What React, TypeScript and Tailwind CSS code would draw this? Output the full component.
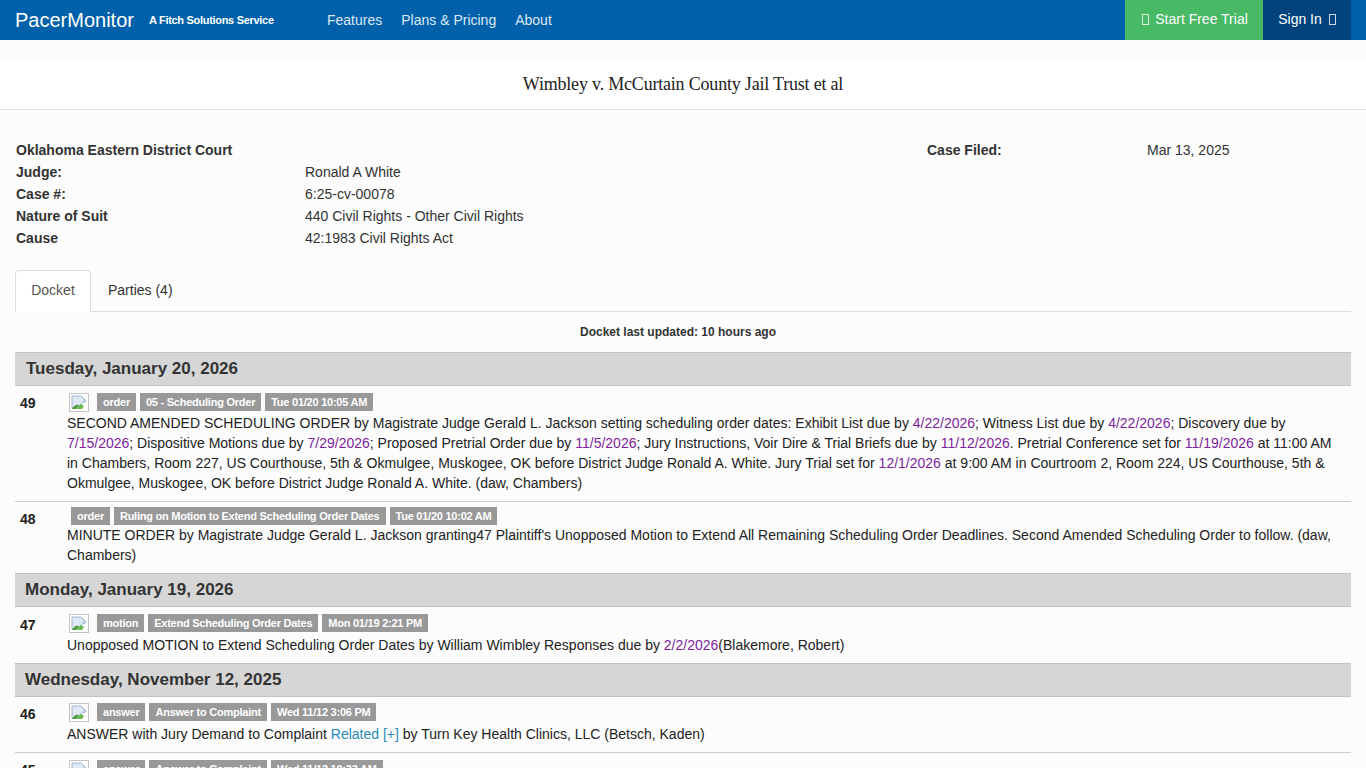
import React from 'react';

const Tofu = () => <span className="inline-block h-[11px] w-[7px] border border-current align-[-1px] opacity-80" />;

const BrokenImage = () => (
    <svg width="20" height="19" viewBox="0 0 20 19" className="shrink-0">
        <rect x="0.5" y="0.5" width="19" height="18" fill="#fff" stroke="#c4c4c4" />
        <path d="M3 3h9l3 3v3l-3 2-3 3-3 1H3z" fill="#dfe8f5" stroke="#8ea4c4" strokeWidth="0.8" />
        <path d="M3 16c2-4 5-5 7-4l-3 4z" fill="#4a9a35" />
        <path d="M7 16l5-5 3 2-2 3z" fill="#6cb84a" />
        <path d="M14 5l3 3-2 2" fill="none" stroke="#8ea4c4" strokeWidth="0.8" />
    </svg>
);

const Tag = ({ children }: { children: React.ReactNode }) => (
    <span className="flex h-[18px] items-center whitespace-nowrap bg-[#999] px-[6px] text-[11px] font-bold tracking-[-0.24px] text-white">{children}</span>
);

const D = ({ children }: { children: React.ReactNode }) => <a className="text-[#7d1f9e]">{children}</a>;

const DateBar = ({ label, pad = 'pl-[10px]' }: { label: string; pad?: string }) => (
    <div className={`flex h-[34px] items-center border-t border-b border-[#c4c4c4] bg-[#d6d6d6] text-[17px] font-bold text-[#333] ${pad}`}>{label}</div>
);

const Entry = ({ num, tags, icon = true, tagPad = 'pl-0', numTop = 'pt-0', className = '', children }: {
    num: string;
    tags: string[];
    icon?: boolean;
    tagPad?: string;
    numTop?: string;
    className?: string;
    children?: React.ReactNode;
}) => (
    <div className={`flex ${className}`}>
        <div className={`w-[52px] shrink-0 pl-[5px] font-bold text-[#222] ${numTop}`}>{num}</div>
        <div className="min-w-0 flex-1 pr-[8px]">
            <div className={`flex h-[18px] items-center gap-[4px] pl-[2px] ${tagPad}`}>
                {icon && <span className="mr-[4px]"><BrokenImage /></span>}
                {tags.map((t) => <Tag key={t}>{t}</Tag>)}
            </div>
            {children}
        </div>
    </div>
);

export default function App() {
    return (
        <div className="h-screen overflow-hidden bg-[#fcfcfc] text-[14px] leading-[20px] text-[#333] font-['Liberation_Sans',Arial,sans-serif]">
            {/* Top nav */}
            <header className="flex h-[40px] items-center bg-[#0060a9] text-white">
                <span className="ml-[15px] w-[134px] text-[20px]">PacerMonitor</span>
                <span className="w-[178px] text-[11px] font-bold tracking-[-0.3px]">A Fitch Solutions Service</span>
                <nav className="flex gap-[19px] text-[14px] text-[#dce9f5]">
                    <span>Features</span>
                    <span>Plans &amp; Pricing</span>
                    <span>About</span>
                </nav>
                <div className="ml-auto mr-[15px] flex h-full">
                    <div className="flex w-[138px] items-center justify-center gap-[6px] bg-[#48b964] pb-[2px] pl-[2px]"><Tofu /> Start Free Trial</div>
                    <div className="flex w-[88px] items-center justify-center gap-[7px] bg-[#00437d] pb-[2px]">Sign In <Tofu /></div>
                </div>
            </header>

            {/* Case title */}
            <div className="mt-[20px] flex h-[50px] items-center justify-center border-b border-[#dedede] bg-white pb-[2px] font-['Liberation_Serif',serif] text-[18px] tracking-[-0.2px] text-[#222]">
                Wimbley v. McCurtain County Jail Trust et al
            </div>

            {/* Case info */}
            <div className="mt-[29px] grid grid-cols-[289px_622px_220px_1fr] pl-[16px] leading-[22px]">
                <b>Oklahoma Eastern District Court</b>
                <span />
                <b>Case Filed:</b>
                <span>Mar 13, 2025</span>
                <b>Judge:</b><span>Ronald A White</span><span /><span />
                <b>Case #:</b><span>6:25-cv-00078</span><span /><span />
                <b>Nature of Suit</b><span>440 Civil Rights - Other Civil Rights</span><span /><span />
                <b>Cause</b><span>42:1983 Civil Rights Act</span><span /><span />
            </div>

            <main className="mx-[15px] mt-[21px]">
                {/* Tabs */}
                <div className="flex h-[42px] border-b border-[#ddd]">
                    <div className="flex h-[42px] w-[76px] items-center justify-center rounded-t border border-b-0 border-[#ddd] bg-white pb-[3px] text-[#555]">Docket</div>
                    <div className="ml-[17px] flex h-[40px] items-center">Parties (4)</div>
                </div>
                <div className="flex h-[40px] items-center justify-center pr-[10px] text-[12px] font-bold">Docket last updated: 10 hours ago</div>

                <DateBar label="Tuesday, January 20, 2026" pad="pl-[11px]" />
                <Entry num="49" tags={['order', '05 - Scheduling Order', 'Tue 01/20 10:05 AM']} className="h-[116px] border-b border-[#ccc] pt-[7px]">
                    <div className="mt-[2px] text-[#222]">
                        SECOND AMENDED SCHEDULING ORDER by Magistrate Judge Gerald L. Jackson setting scheduling order dates: Exhibit List due by <D>4/22/2026</D>; Witness List due by <D>4/22/2026</D>; Discovery due by <D>7/15/2026</D>; Dispositive Motions due by <D>7/29/2026</D>; Proposed Pretrial Order due by <D>11/5/2026</D>; Jury Instructions, Voir Dire &amp; Trial Briefs due by <D>11/12/2026</D>. Pretrial Conference set for <D>11/19/2026</D> at 11:00 AM in Chambers, Room 227, US Courthouse, 5th &amp; Okmulgee, Muskogee, OK before District Judge Ronald A. White. Jury Trial set for <D>12/1/2026</D> at 9:00 AM in Courtroom 2, Room 224, US Courthouse, 5th &amp; Okmulgee, Muskogee, OK before District Judge Ronald A. White. (daw, Chambers)
                    </div>
                </Entry>
                <Entry num="48" tags={['order', 'Ruling on Motion to Extend Scheduling Order Dates', 'Tue 01/20 10:02 AM']} icon={false} tagPad="pl-[4px]" numTop="pt-[2px]" className="h-[71px] pt-[5px]">
                    <div className="text-[#222]">
                        MINUTE ORDER by Magistrate Judge Gerald L. Jackson granting47 Plaintiff's Unopposed Motion to Extend All Remaining Scheduling Order Deadlines. Second Amended Scheduling Order to follow. (daw, Chambers)
                    </div>
                </Entry>

                <DateBar label="Monday, January 19, 2026" />
                <Entry num="47" tags={['motion', 'Extend Scheduling Order Dates', 'Mon 01/19 2:21 PM']} numTop="pt-[1px]" className="h-[56px] pt-[7px]">
                    <div className="mt-[3px] text-[#222]">
                        Unopposed MOTION to Extend Scheduling Order Dates by William Wimbley Responses due by <D>2/2/2026</D>(Blakemore, Robert)
                    </div>
                </Entry>

                <DateBar label="Wednesday, November 12, 2025" />
                <Entry num="46" tags={['answer', 'Answer to Complaint', 'Wed 11/12 3:06 PM']} numTop="pt-[1px]" className="h-[56px] border-b border-[#ccc] pt-[6px]">
                    <div className="mt-[3px] text-[#222]">
                        ANSWER with Jury Demand to Complaint <a className="text-[#2a8ab8]">Related [+]</a> by Turn Key Health Clinics, LLC (Betsch, Kaden)
                    </div>
                </Entry>
                <Entry num="45" tags={['answer', 'Answer to Complaint', 'Wed 11/12 10:33 AM']} className="pt-[7px]" />
            </main>
        </div>
    );
}
